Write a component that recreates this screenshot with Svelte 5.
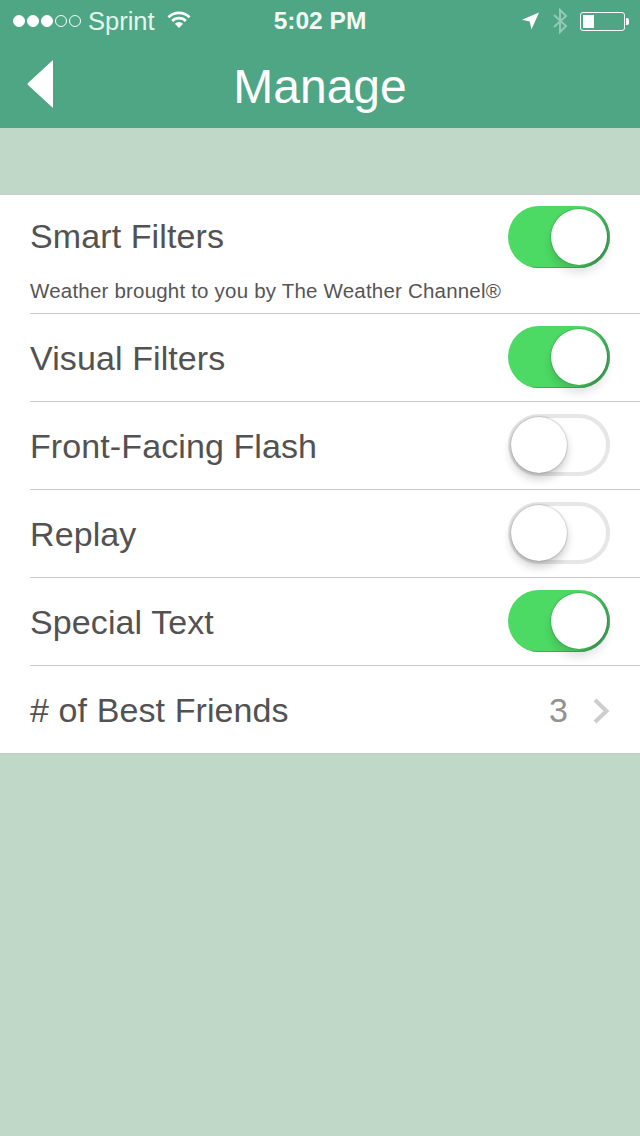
<script>
  const rows = [
    { label: 'Visual Filters', on: true },
    { label: 'Front-Facing Flash', on: false },
    { label: 'Replay', on: false },
    { label: 'Special Text', on: true }
  ];
</script>

<div class="page">
  <header class="header">
    <div class="status">
      <div class="status-left">
        <div class="dots">
          <i class="dot full"></i><i class="dot full"></i><i class="dot full"></i><i class="dot"></i><i class="dot"></i>
        </div>
        <span class="carrier">Sprint</span>
        <svg class="wifi" width="26" height="20" viewBox="0 0 26 20">
          <path d="M1.5 7.2A16.5 16.5 0 0 1 24.5 7.2L22.6 9.2A13.8 13.8 0 0 0 3.4 9.2Z" fill="#fff"/>
          <path d="M5.2 11A11.2 11.2 0 0 1 20.8 11L18.9 13A8.4 8.4 0 0 0 7.1 13Z" fill="#fff"/>
          <path d="M8.9 14.7A5.9 5.9 0 0 1 17.1 14.7L13 19Z" fill="#fff"/>
        </svg>
      </div>
      <span class="time">5:02 PM</span>
      <div class="status-right">
        <svg class="loc" width="19" height="20" viewBox="0 0 20 20"><path d="M19 1L11 19L9.2 10.4L1 8.6Z" fill="#fff"/></svg>
        <svg class="bt" width="16" height="28" viewBox="0 0 16 28"><path d="M2 8L14 19L8 25V3L14 9L2 20" fill="none" stroke="#fff" stroke-opacity=".4" stroke-width="2"/></svg>
        <div class="battery"><div class="level"></div></div><i class="nub"></i>
      </div>
    </div>
    <div class="nav">
      <svg class="back" width="27" height="48" viewBox="0 0 27 48"><path d="M26 0V48L1 25Q0 24 1 23Z" fill="#fff"/></svg>
      <h1>Manage</h1>
    </div>
  </header>

  <section class="card">
    <div class="row first">
      <div class="first-main">
        <span class="label up">Smart Filters</span>
        <span class="toggle on"><i class="knob"></i></span>
      </div>
      <p class="note">Weather brought to you by The Weather Channel®</p>
    </div>
    {#each rows as r}
      <div class="row">
        <div class="row-main">
          <span class="label">{r.label}</span>
          <span class="toggle raised" class:on={r.on}><i class="knob"></i></span>
        </div>
      </div>
    {/each}
    <div class="row">
      <div class="row-main">
        <span class="label">
          # of Best Friends
        </span>
        <span class="value">3
          <svg width="18" height="26" viewBox="0 0 18 26"><path d="M3 2L14.500 13L3 24" fill="none" stroke="#cdcdcd" stroke-width="4"/></svg>
        </span>
      </div>
    </div>
  </section>
</div>

<style>
  :global(body) { margin: 0; background: #c0d8c8; }
  .page {
    width: 640px;
    height: 1136px;
    overflow: hidden;
    background: #c0d8c8;
    font-family: "Liberation Sans", Arial, sans-serif;
  }
  .header { height: 128px; background: #4ea685; color: #fff; }
  .status {
    height: 42px;
    display: grid;
    grid-template-columns: 1fr auto 1fr;
    align-items: center;
    padding: 0 12px 0 12px;
  }
  .status-left { display: flex; align-items: center; padding-left: 1px; }
  .dots { display: flex; gap: 2px; }
  .dot {
    width: 12px; height: 12px; box-sizing: border-box;
    border: 1px solid #fff; border-radius: 50%;
  }
  .dot.full { background: #fff; }
  .carrier { font-size: 25.500px; margin-left: 7px; color: #e4f6ec; }
  .wifi { margin-left: 11px; margin-bottom: 4px; }
  .time { font-size: 24.500px; font-weight: 700; color: #f4fbf7; }
  .status-right { display: flex; align-items: center; justify-content: flex-end; margin-right: -1px; }
  .loc { margin-right: 12px; margin-bottom: 1px; }
  .bt { margin-right: 12px; }
  .battery {
    width: 45px; height: 19px; box-sizing: border-box;
    border: 1px solid #fff; border-radius: 3px; padding: 2px;
  }
  .level { width: 11px; height: 13px; background: #fff; }
  .nub { width: 3px; height: 7px; background: #fff; margin-left: 1px; border-radius: 0 2px 2px 0; }
  .nav {
    position: relative;
    height: 86px;
    display: flex;
    align-items: center;
    justify-content: center;
  }
  .back { position: absolute; left: 27px; top: 18px; }
  h1 { margin: 2px 0 0; font-size: 48px; font-weight: 400; color: #fff; }

  .card {
    margin-top: 66px;
    background: #fff;
    border-top: 1px solid #cbcbcb;
    border-bottom: 1px solid #c9c9c9;
    padding-left: 30px;
  }
  .row { border-top: 1px solid #c8c8c8; height: 87px; }
  .row.first { border-top: 0; height: 118px; }
  .first-main { height: 84px; display: flex; align-items: center; justify-content: space-between; padding-right: 30px; }
  .row-main { height: 87px; display: flex; align-items: center; justify-content: space-between; padding-right: 30px; }
  .label { font-size: 34px; letter-spacing: 0.1px; color: #525252; padding-top: 2px; }
  .label.up { padding-top: 0; padding-bottom: 2px; }
  .note { margin: 0; font-size: 20.500px; letter-spacing: 0.2px; line-height: 24px; color: #555; }
  .toggle {
    position: relative;
    display: block;
    width: 102px; height: 62px; box-sizing: border-box;
    border-radius: 31px;
    border: 4px solid #e6e6e6;
    background: #fff;
  }
  .toggle.raised { margin-bottom: 2px; }
  .toggle.on { background: #4cd964; border: 0; box-shadow: inset -3px -1px 0 #44a860; }
  .knob {
    position: absolute;
    width: 56px; height: 56px;
    left: -1px; top: -1px;
    border-radius: 50%;
    background: #fff;
    box-shadow: 0 6px 10px rgba(0,0,0,.2), 0 0 2px rgba(0,0,0,.4);
  }
  .toggle.on .knob { left: 43px; top: 3px; box-shadow: 0 8px 10px rgba(0,0,0,.12), 0 0 2px rgba(0,60,20,.5); }
  .value {
    display: flex; align-items: center; gap: 24px;
    font-size: 34px; color: #929292; padding-top: 2px;
  }
</style>
